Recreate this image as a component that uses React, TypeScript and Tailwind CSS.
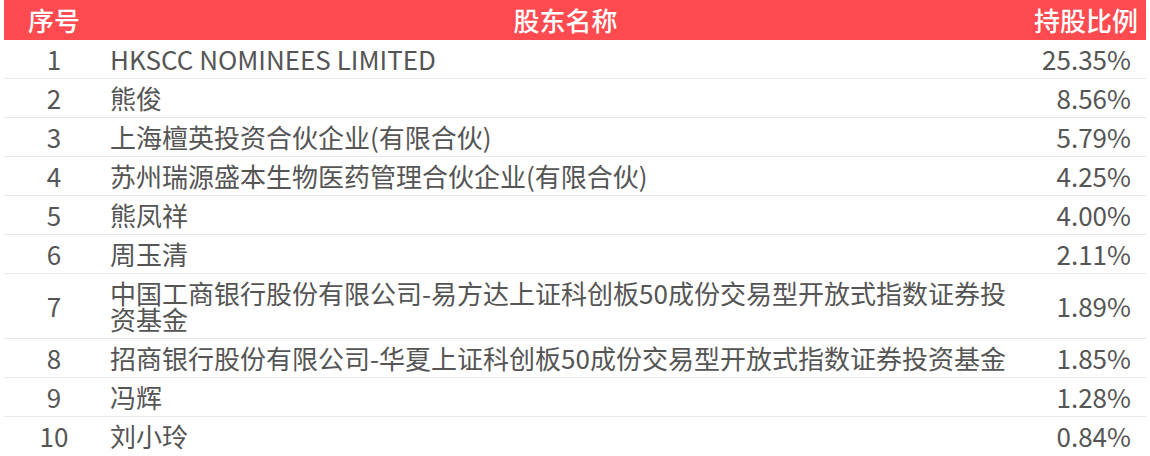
import React from "react";

const rows: { name: string; pct: string }[] = [
  { name: "HKSCC NOMINEES LIMITED", pct: "25.35%" },
  { name: "熊俊", pct: "8.56%" },
  { name: "上海檀英投资合伙企业(有限合伙)", pct: "5.79%" },
  { name: "苏州瑞源盛本生物医药管理合伙企业(有限合伙)", pct: "4.25%" },
  { name: "熊凤祥", pct: "4.00%" },
  { name: "周玉清", pct: "2.11%" },
  { name: "中国工商银行股份有限公司-易方达上证科创板50成份交易型开放式指数证券投资基金", pct: "1.89%" },
  { name: "招商银行股份有限公司-华夏上证科创板50成份交易型开放式指数证券投资基金", pct: "1.85%" },
  { name: "冯辉", pct: "1.28%" },
  { name: "刘小玲", pct: "0.84%" },
];

export default function App() {
  return (
    <div
      className="w-[1150px] h-[456px] bg-white overflow-hidden px-1"
      style={{ fontFamily: '"Noto Sans CJK SC", "Noto Sans", sans-serif' }}
    >
      <table className="w-[1142px] table-fixed border-collapse text-[26px] leading-[26px] text-[#555]">
        <colgroup>
          <col className="w-[100px]" />
          <col className="w-[923px]" />
          <col className="w-[119px]" />
        </colgroup>
        <thead>
          <tr className="bg-[#ff4b50] text-white font-medium h-[40px]">
            <th className="px-0 text-center font-medium">序号</th>
            <th className="text-center font-medium">股东名称</th>
            <th className="pr-2 text-right font-medium">持股比例</th>
          </tr>
        </thead>
        <tbody>
          {rows.map((r, i) => (
            <tr key={i} className="border-b border-[#e8e8ee] last:border-b-0">
              <td className="py-[6px] text-center align-middle">{i + 1}</td>
              <td className="py-[6px] px-[6px] text-left align-middle">{r.name}</td>
              <td className="py-[6px] pr-[15px] text-right align-middle">{r.pct}</td>
            </tr>
          ))}
        </tbody>
      </table>
    </div>
  );
}
